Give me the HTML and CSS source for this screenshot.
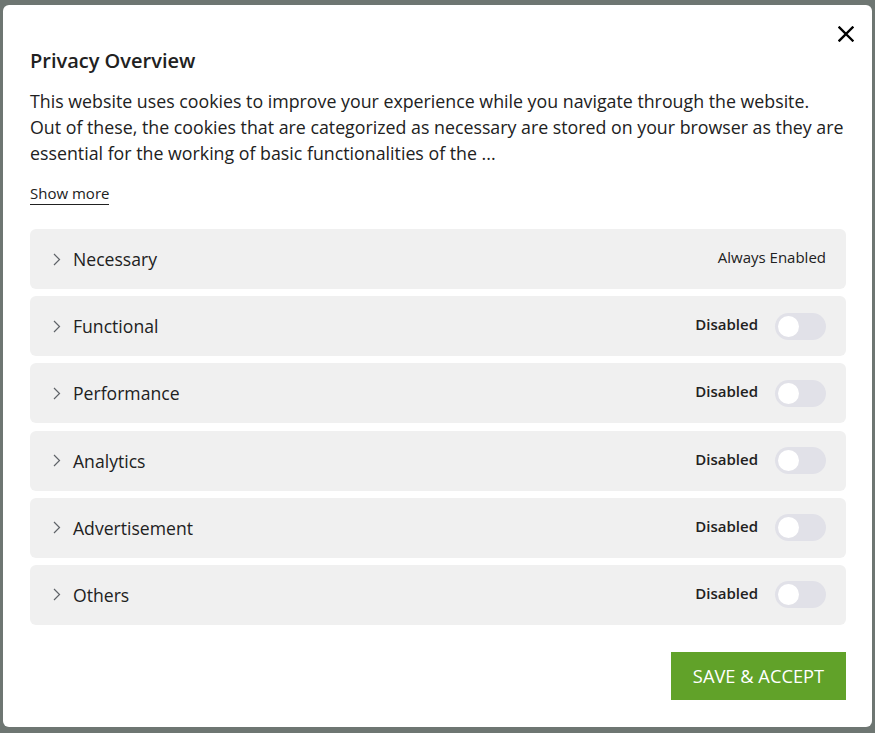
FILE: index.html
```html
<!DOCTYPE html>
<html lang="en">
<head>
<meta charset="utf-8">
<title>Privacy Overview</title>
<link rel="stylesheet" href="styles.css">
</head>
<body>
<div class="modal">
  <button class="close" aria-label="Close">
    <svg width="16" height="16" viewBox="0 0 16 16"><path d="M1.5 1.5 L14.5 14.5 M14.5 1.5 L1.5 14.5" stroke="#000" stroke-width="2.4" stroke-linecap="square" fill="none"/></svg>
  </button>
  <h2 class="title">Privacy Overview</h2>
  <p class="desc">This website uses cookies to improve your experience while you navigate through the website.<br>Out of these, the cookies that are categorized as necessary are stored on your browser as they are essential for the working of basic functionalities of the ...</p>
  <div class="more-wrap"><a class="more">Show more</a></div>
  <div class="list">
    <div class="row">
      <div class="left"><svg class="chev" width="8" height="13" viewBox="0 0 8 13"><path d="M1 1 L6.5 6.5 L1 12" stroke="#5f6368" stroke-width="1.2" fill="none"/></svg><span class="label">Necessary</span></div>
      <span class="always">Always Enabled</span>
    </div>
    <div class="row">
      <div class="left"><svg class="chev" width="8" height="13" viewBox="0 0 8 13"><path d="M1 1 L6.5 6.5 L1 12" stroke="#5f6368" stroke-width="1.2" fill="none"/></svg><span class="label">Functional</span></div>
      <div class="right"><span class="state">Disabled</span><span class="toggle"><span class="knob"></span></span></div>
    </div>
    <div class="row">
      <div class="left"><svg class="chev" width="8" height="13" viewBox="0 0 8 13"><path d="M1 1 L6.5 6.5 L1 12" stroke="#5f6368" stroke-width="1.2" fill="none"/></svg><span class="label">Performance</span></div>
      <div class="right"><span class="state">Disabled</span><span class="toggle"><span class="knob"></span></span></div>
    </div>
    <div class="row">
      <div class="left"><svg class="chev" width="8" height="13" viewBox="0 0 8 13"><path d="M1 1 L6.5 6.5 L1 12" stroke="#5f6368" stroke-width="1.2" fill="none"/></svg><span class="label">Analytics</span></div>
      <div class="right"><span class="state">Disabled</span><span class="toggle"><span class="knob"></span></span></div>
    </div>
    <div class="row">
      <div class="left"><svg class="chev" width="8" height="13" viewBox="0 0 8 13"><path d="M1 1 L6.5 6.5 L1 12" stroke="#5f6368" stroke-width="1.2" fill="none"/></svg><span class="label">Advertisement</span></div>
      <div class="right"><span class="state">Disabled</span><span class="toggle"><span class="knob"></span></span></div>
    </div>
    <div class="row">
      <div class="left"><svg class="chev" width="8" height="13" viewBox="0 0 8 13"><path d="M1 1 L6.5 6.5 L1 12" stroke="#5f6368" stroke-width="1.2" fill="none"/></svg><span class="label">Others</span></div>
      <div class="right"><span class="state">Disabled</span><span class="toggle"><span class="knob"></span></span></div>
    </div>
  </div>
  <div class="footer"><button class="save">SAVE &amp; ACCEPT</button></div>
</div>
</body>
</html>
```
FILE: styles.css
```css
* { box-sizing: border-box; }
html, body { height: 100%; }
body {
  margin: 0;
  background: #6e7672;
  padding: 5px 3px 6px 3px;
  font-family: "Open Sans", "Noto Sans", sans-serif;
  color: #212121;
}
.modal {
  position: relative;
  background: #fff;
  border-radius: 6px;
  height: 100%;
  padding: 43px 26px 0 27px;
}
.close {
  position: absolute;
  top: 21px;
  right: 18px;
  border: 0;
  background: none;
  padding: 0;
  width: 16px;
  height: 16px;
  cursor: pointer;
}
.close svg { display: block; }
.title {
  margin: 0;
  font-size: 20px;
  line-height: 26px;
  font-weight: 600;
  color: #212121;
}
.desc {
  margin: 14px -2px 0 0;
  font-size: 17.8px;
  line-height: 26px;
  color: #212121;
}
.more-wrap { margin-top: 17px; line-height: 20px; }
.more {
  font-size: 15px;
  color: #212121;
  border-bottom: 1px solid #212121;
  padding-bottom: 1px;
}
.list {
  margin-top: 26px;
  display: flex;
  flex-direction: column;
  gap: 7.2px;
}
.row {
  height: 60px;
  background: #f0f0f0;
  border-radius: 6px;
  display: flex;
  align-items: center;
  justify-content: space-between;
  padding: 0 20px 0 23px;
}
.left { display: flex; align-items: center; gap: 12px; }
.chev { display: block; }
.label { font-size: 17.6px; color: #212121; }
.always { font-size: 15px; color: #212121; margin-top: -4px; }
.right { display: flex; align-items: center; gap: 17px; }
.state { font-size: 15px; font-weight: 600; color: #212121; margin-top: -4px; }
.toggle {
  width: 51px;
  height: 27px;
  border-radius: 14px;
  background: #e1e1e8;
  display: flex;
  align-items: center;
  padding-left: 3px;
}
.knob {
  width: 21px;
  height: 21px;
  border-radius: 50%;
  background: #fff;
}
.footer {
  display: flex;
  justify-content: flex-end;
  margin-top: 27px;
}
.save {
  background: #61a229;
  color: #fff;
  border: 0;
  height: 48px;
  width: 175px;
  font-family: inherit;
  font-size: 18.3px;
  padding: 0;
}
```
